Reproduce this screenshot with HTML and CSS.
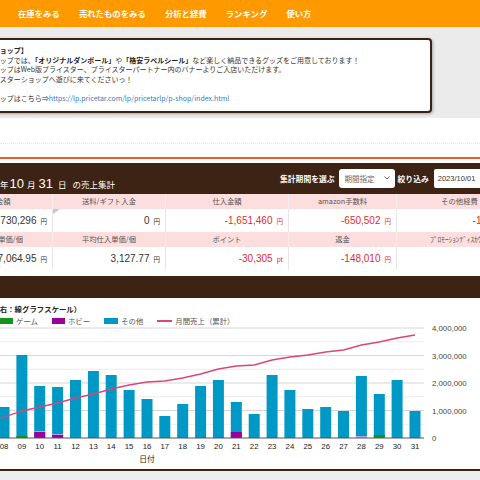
FILE: index.html
```html
<!DOCTYPE html>
<html lang="ja">
<head>
    <meta charset="UTF-8">
    <meta name="viewport" content="width=device-width, initial-scale=1.0">
    <title>分析と経費</title>
    <link rel="stylesheet" href="styles.css">
</head>
<body>
    <nav class="gnav">
        <a href="#">在庫をみる</a>
        <a href="#">売れたものをみる</a>
        <a href="#">分析と経費</a>
        <a href="#">ランキング</a>
        <a href="#">使い方</a>
    </nav>

    <div class="info-area">
        <div class="info-box">
            <p class="info-title">【プライスターショップ】</p>
            <p>プライスターショップでは、<b>「オリジナルダンボール」</b>や<b>「格安ラベルシール」</b>など楽しく納品できるグッズをご用意しております！</p>
            <p>プライスターショップはWeb版プライスター、プライスターパートナー内のバナーよりご入店いただけます。</p>
            <p>ぜひ皆さまプライスターショップへ遊びに来てくださいっ！</p>
            <p>&nbsp;</p>
            <p>プライスターショップはこちら⇒<a href="#">https://lp.pricetar.com/lp/pricetarlp/p-shop/index.html</a></p>
        </div>
    </div>

    <div class="spacer"></div>

    <section class="summary">
        <div class="summary-head">
            <h2>
                <span class="big">2023</span><span class="unit u-year">年</span><span class="big">10</span><span class="unit u-month">月</span><span class="big">31</span><span class="unit u-day">日</span><span class="unit u-title">の売上集計</span>
            </h2>
            <div class="period">
                <span class="period-label">集計期間を選ぶ</span>
                <div class="select-box">
                    <span>期間指定</span>
                    <svg width="6" height="4" viewBox="0 0 6 4"><path d="M0.5 0.5 L3 3 L5.5 0.5" fill="none" stroke="#555" stroke-width="0.9"/></svg>
                </div>
                <span class="period-label">絞り込み</span>
                <div class="date-box">2023/10/01</div>
            </div>
        </div>

        <div class="summary-table">
            <div class="lbl">売上金額</div>
            <div class="lbl">送料/ギフト入金</div>
            <div class="lbl">仕入金額</div>
            <div class="lbl">amazon手数料</div>
            <div class="lbl">その他経費</div>

            <div class="val">3,730,296<span class="yen">円</span></div>
            <div class="val memo">0<span class="yen">円</span></div>
            <div class="val minus">-1,651,460<span class="yen">円</span></div>
            <div class="val minus">-650,502<span class="yen">円</span></div>
            <div class="val minus">-12,340<span class="yen">円</span></div>

            <div class="lbl">平均売上単価/個</div>
            <div class="lbl">平均仕入単価/個</div>
            <div class="lbl">ポイント</div>
            <div class="lbl">返金</div>
            <div class="lbl">ﾌﾟﾛﾓｰｼｮﾝﾃﾞｨｽｶｳﾝﾄ</div>

            <div class="val">17,064.95<span class="yen">円</span></div>
            <div class="val">3,127.77<span class="yen">円</span></div>
            <div class="val minus">-30,305<span class="yen">pt</span></div>
            <div class="val minus">-148,010<span class="yen">円</span></div>
            <div class="val"></div>
        </div>
    </section>

    <div class="chart-bar"></div>

    <section class="chart">
        <p class="chart-title">（左：棒グラフ、右：線グラフスケール）</p>
        <ul class="legend">
            <li><span class="swatch game"></span>ゲーム</li>
            <li><span class="swatch hobby"></span>ホビー</li>
            <li><span class="swatch other"></span>その他</li>
            <li><span class="swatch line"></span>月間売上（累計）</li>
        </ul>
        <svg class="plot" width="480" height="143" viewBox="0 0 480 143">
            <!-- 補助線 -->
            <g stroke="#ececec" stroke-width="1">
                <line x1="0" y1="15.75" x2="424" y2="15.75"/>
                <line x1="0" y1="43.25" x2="424" y2="43.25"/>
                <line x1="0" y1="70.75" x2="424" y2="70.75"/>
                <line x1="0" y1="98.25" x2="424" y2="98.25"/>
            </g>
            <g stroke="#d6d6d6" stroke-width="1">
                <line x1="0" y1="2" x2="424" y2="2"/>
                <line x1="0" y1="29.5" x2="424" y2="29.5"/>
                <line x1="0" y1="57" x2="424" y2="57"/>
                <line x1="0" y1="84.5" x2="424" y2="84.5"/>
            </g>

            <!-- 棒グラフ（その他） -->
            <g fill="#0099c6">
                <rect x="-1.5" y="81" width="11" height="31"/>
                <rect x="16.4" y="29" width="11" height="83"/>
                <rect x="34.2" y="60" width="11" height="52"/>
                <rect x="52.1" y="61" width="11" height="51"/>
                <rect x="70.0" y="54" width="11" height="58"/>
                <rect x="87.9" y="45" width="11" height="67"/>
                <rect x="105.7" y="49" width="11" height="63"/>
                <rect x="123.6" y="64" width="11" height="48"/>
                <rect x="141.5" y="73" width="11" height="39"/>
                <rect x="159.3" y="90" width="11" height="22"/>
                <rect x="177.2" y="78" width="11" height="34"/>
                <rect x="195.1" y="60" width="11" height="52"/>
                <rect x="212.9" y="54" width="11" height="58"/>
                <rect x="230.8" y="76" width="11" height="36"/>
                <rect x="248.7" y="88" width="11" height="24"/>
                <rect x="266.6" y="49" width="11" height="63"/>
                <rect x="284.4" y="64" width="11" height="48"/>
                <rect x="302.3" y="83" width="11" height="29"/>
                <rect x="320.2" y="81" width="11" height="31"/>
                <rect x="338.0" y="85" width="11" height="27"/>
                <rect x="355.9" y="50" width="11" height="62"/>
                <rect x="373.8" y="68" width="11" height="44"/>
                <rect x="391.6" y="54" width="11" height="58"/>
                <rect x="409.5" y="85" width="11" height="27"/>
            </g>
            <!-- ゲーム / ホビー -->
            <g fill="#b9a3e0">
                <rect x="34.2" y="105" width="11" height="1"/>
                <rect x="52.1" y="108" width="11" height="1"/>
                <rect x="355.9" y="110" width="11" height="2"/>
            </g>
            <g fill="#990099">
                <rect x="34.2" y="106" width="11" height="6"/>
                <rect x="52.1" y="109" width="11" height="3"/>
                <rect x="230.8" y="106" width="11" height="6"/>
            </g>
            <g fill="#109618">
                <rect x="16.4" y="110" width="11" height="2"/>
                <rect x="373.8" y="109" width="11" height="3"/>
            </g>

            <line x1="0" y1="112" x2="424" y2="112" stroke="#555" stroke-width="1"/>

            <!-- 月間売上（累計） -->
            <polyline fill="none" stroke="#dd4477" stroke-width="1.3"
                points="-13.9,95 4,91 21.9,85 39.7,81 57.6,77 75.5,72 93.4,68 111.2,63 129.1,59 147,56 164.8,55 182.7,52 200.6,48 218.4,43 236.3,40 254.2,39 272,34 289.9,31 307.8,29 325.7,26 343.5,24 361.4,19 379.3,16 397.1,12 415,9"/>

            <g class="axis-y">
                <text x="432" y="5">4,000,000</text>
                <text x="432" y="32.5">3,000,000</text>
                <text x="432" y="60">2,000,000</text>
                <text x="432" y="87.5">1,000,000</text>
                <text x="432" y="115">0</text>
            </g>
            <g class="axis-x">
                <text x="4" y="123">08</text>
                <text x="21.9" y="123">09</text>
                <text x="39.7" y="123">10</text>
                <text x="57.6" y="123">11</text>
                <text x="75.5" y="123">12</text>
                <text x="93.4" y="123">13</text>
                <text x="111.2" y="123">14</text>
                <text x="129.1" y="123">15</text>
                <text x="147" y="123">16</text>
                <text x="164.8" y="123">17</text>
                <text x="182.7" y="123">18</text>
                <text x="200.6" y="123">19</text>
                <text x="218.4" y="123">20</text>
                <text x="236.3" y="123">21</text>
                <text x="254.2" y="123">22</text>
                <text x="272" y="123">23</text>
                <text x="289.9" y="123">24</text>
                <text x="307.8" y="123">25</text>
                <text x="325.7" y="123">26</text>
                <text x="343.5" y="123">27</text>
                <text x="361.4" y="123">28</text>
                <text x="379.3" y="123">29</text>
                <text x="397.1" y="123">30</text>
                <text x="415" y="123">31</text>
            </g>
            <text class="axis-title" x="147" y="136">日付</text>
        </svg>
    </section>

    <div class="page-foot"></div>
</body>
</html>
```

FILE: styles.css
```css
body {
    font-family: 'Noto Sans CJK JP', 'Noto Sans', sans-serif;
    margin: 0;
    background-color: #ffffff;
    color: #333;
    overflow: hidden;
}

p {
    margin: 0;
}

/* グローバルナビ */
.gnav {
    height: 27px;
    background-color: #ff9900;
    display: flex;
    align-items: center;
    gap: 19px;
    padding-left: 18px;
}

.gnav a {
    color: #ffffff;
    font-size: 8.4px;
    font-weight: bold;
    text-decoration: none;
    line-height: 1;
}

/* お知らせ */
.info-area {
    background-color: #ebebeb;
    padding: 11px 0 5px;
}

.info-box {
    box-sizing: border-box;
    width: 496px;
    margin-left: -64px;
    background-color: #ffffff;
    border: 2px solid #3a2314;
    border-radius: 4px;
    box-shadow: 1px 1px 3px rgba(0, 0, 0, 0.3);
    padding: 6px 6px 7px;
    font-size: 7px;
    line-height: 9.6px;
    white-space: nowrap;
    overflow: hidden;
}

.info-box b,
.info-title {
    font-weight: bold;
    color: #222;
}

.info-box a {
    color: #3a78c8;
    text-decoration: none;
}

.spacer {
    height: 25px;
    border-bottom: 1px dotted #e4e4e4;
    margin-bottom: 13px;
}

/* 売上集計 */
.summary {
    border-top: 2px solid #e5602a;
    padding-top: 4px;
}

.summary-head {
    height: 31px;
    background-color: #3d2314;
    color: #ffffff;
    display: flex;
    align-items: center;
}

.summary-head h2 {
    flex: 0 0 311px;
    margin: 0 0 0 -31px;
    font-weight: normal;
    white-space: nowrap;
    line-height: 1;
}

.big {
    font-family: 'Liberation Sans', Arial, sans-serif;
    font-size: 13px;
}

.unit {
    font-size: 8.5px;
}

.u-year { margin: 0 1px 0 2px; }
.u-month { margin: 0 3px 0 3px; }
.u-day { margin-left: 5px; }
.u-title { margin-left: 6px; }

.period {
    display: flex;
    align-items: center;
    white-space: nowrap;
}

.period-label {
    font-size: 7.8px;
    font-weight: bold;
}

.select-box {
    box-sizing: border-box;
    width: 56px;
    height: 19px;
    margin: 0 3px 0 4px;
    background-color: #ffffff;
    border-radius: 3px;
    display: flex;
    align-items: center;
    justify-content: space-between;
    padding: 0 5px 0 6px;
    font-size: 7.5px;
    color: #666;
}

.date-box {
    box-sizing: border-box;
    width: 80px;
    height: 19px;
    margin-left: 5px;
    background-color: #ffffff;
    border-radius: 2px;
    padding-left: 4px;
    font-family: 'Liberation Sans', Arial, sans-serif;
    font-size: 7.5px;
    line-height: 19px;
    color: #333;
}

.summary-table {
    display: grid;
    grid-template-columns: 113px 113px 123px 108px 126px;
    grid-template-rows: 15px 23px 15px 23px;
    margin-left: -60px;
    width: 583px;
}

.lbl {
    background-color: #fcdede;
    border-right: 1px solid #f3ecec;
    font-size: 7.3px;
    line-height: 15px;
    text-align: center;
    color: #555;
    white-space: nowrap;
}

.val {
    position: relative;
    box-sizing: border-box;
    background-color: #ffffff;
    border-right: 1px solid #e6e6e6;
    padding-right: 5px;
    text-align: right;
    font-family: 'Liberation Sans', Arial, sans-serif;
    font-size: 10px;
    line-height: 23px;
    color: #333;
    white-space: nowrap;
}

.val.minus {
    color: #e42b2b;
}

.yen {
    font-family: 'Noto Sans CJK JP', sans-serif;
    font-size: 6.5px;
    margin-left: 4px;
}

.val.memo::before {
    content: "";
    position: absolute;
    left: 0;
    top: 0;
    border-top: 5px solid #c8c8c8;
    border-right: 7px solid transparent;
}

.chart-bar {
    height: 22px;
    margin-top: 6px;
    background-color: #3d2314;
}

/* グラフ */
.chart {
    background-color: #ffffff;
    padding-top: 5px;
}

.chart-title {
    font-size: 7.4px;
    font-weight: bold;
    line-height: 11px;
    color: #222;
    white-space: nowrap;
    margin-left: -59px;
}

.legend {
    list-style: none;
    margin: 1px 0 0;
    padding: 0;
    height: 12px;
    display: flex;
    align-items: center;
    font-size: 7.4px;
    color: #555;
    white-space: nowrap;
}

.legend li {
    display: flex;
    align-items: center;
    margin-right: 14px;
}

.swatch {
    display: inline-block;
    width: 13px;
    height: 6px;
    margin-right: 3px;
}

.swatch.game { background-color: #109618; }
.swatch.hobby { background-color: #990099; }
.swatch.other { background-color: #0099c6; width: 14px; }
.swatch.line {
    width: 15px;
    height: 2px;
    background-color: #dd4477;
}

.plot {
    display: block;
    margin-top: -1px;
    overflow: visible;
}

.plot text {
    font-family: 'Liberation Sans', Arial, sans-serif;
    font-size: 7.8px;
    fill: #444;
}

.plot .axis-x text {
    text-anchor: middle;
    fill: #222;
}

.plot .axis-title {
    font-family: 'Noto Sans CJK JP', sans-serif;
    text-anchor: middle;
    fill: #222;
}

.page-foot {
    border-top: 2px solid #3d2314;
    height: 20px;
    background-color: #eeeeee;
}
```
